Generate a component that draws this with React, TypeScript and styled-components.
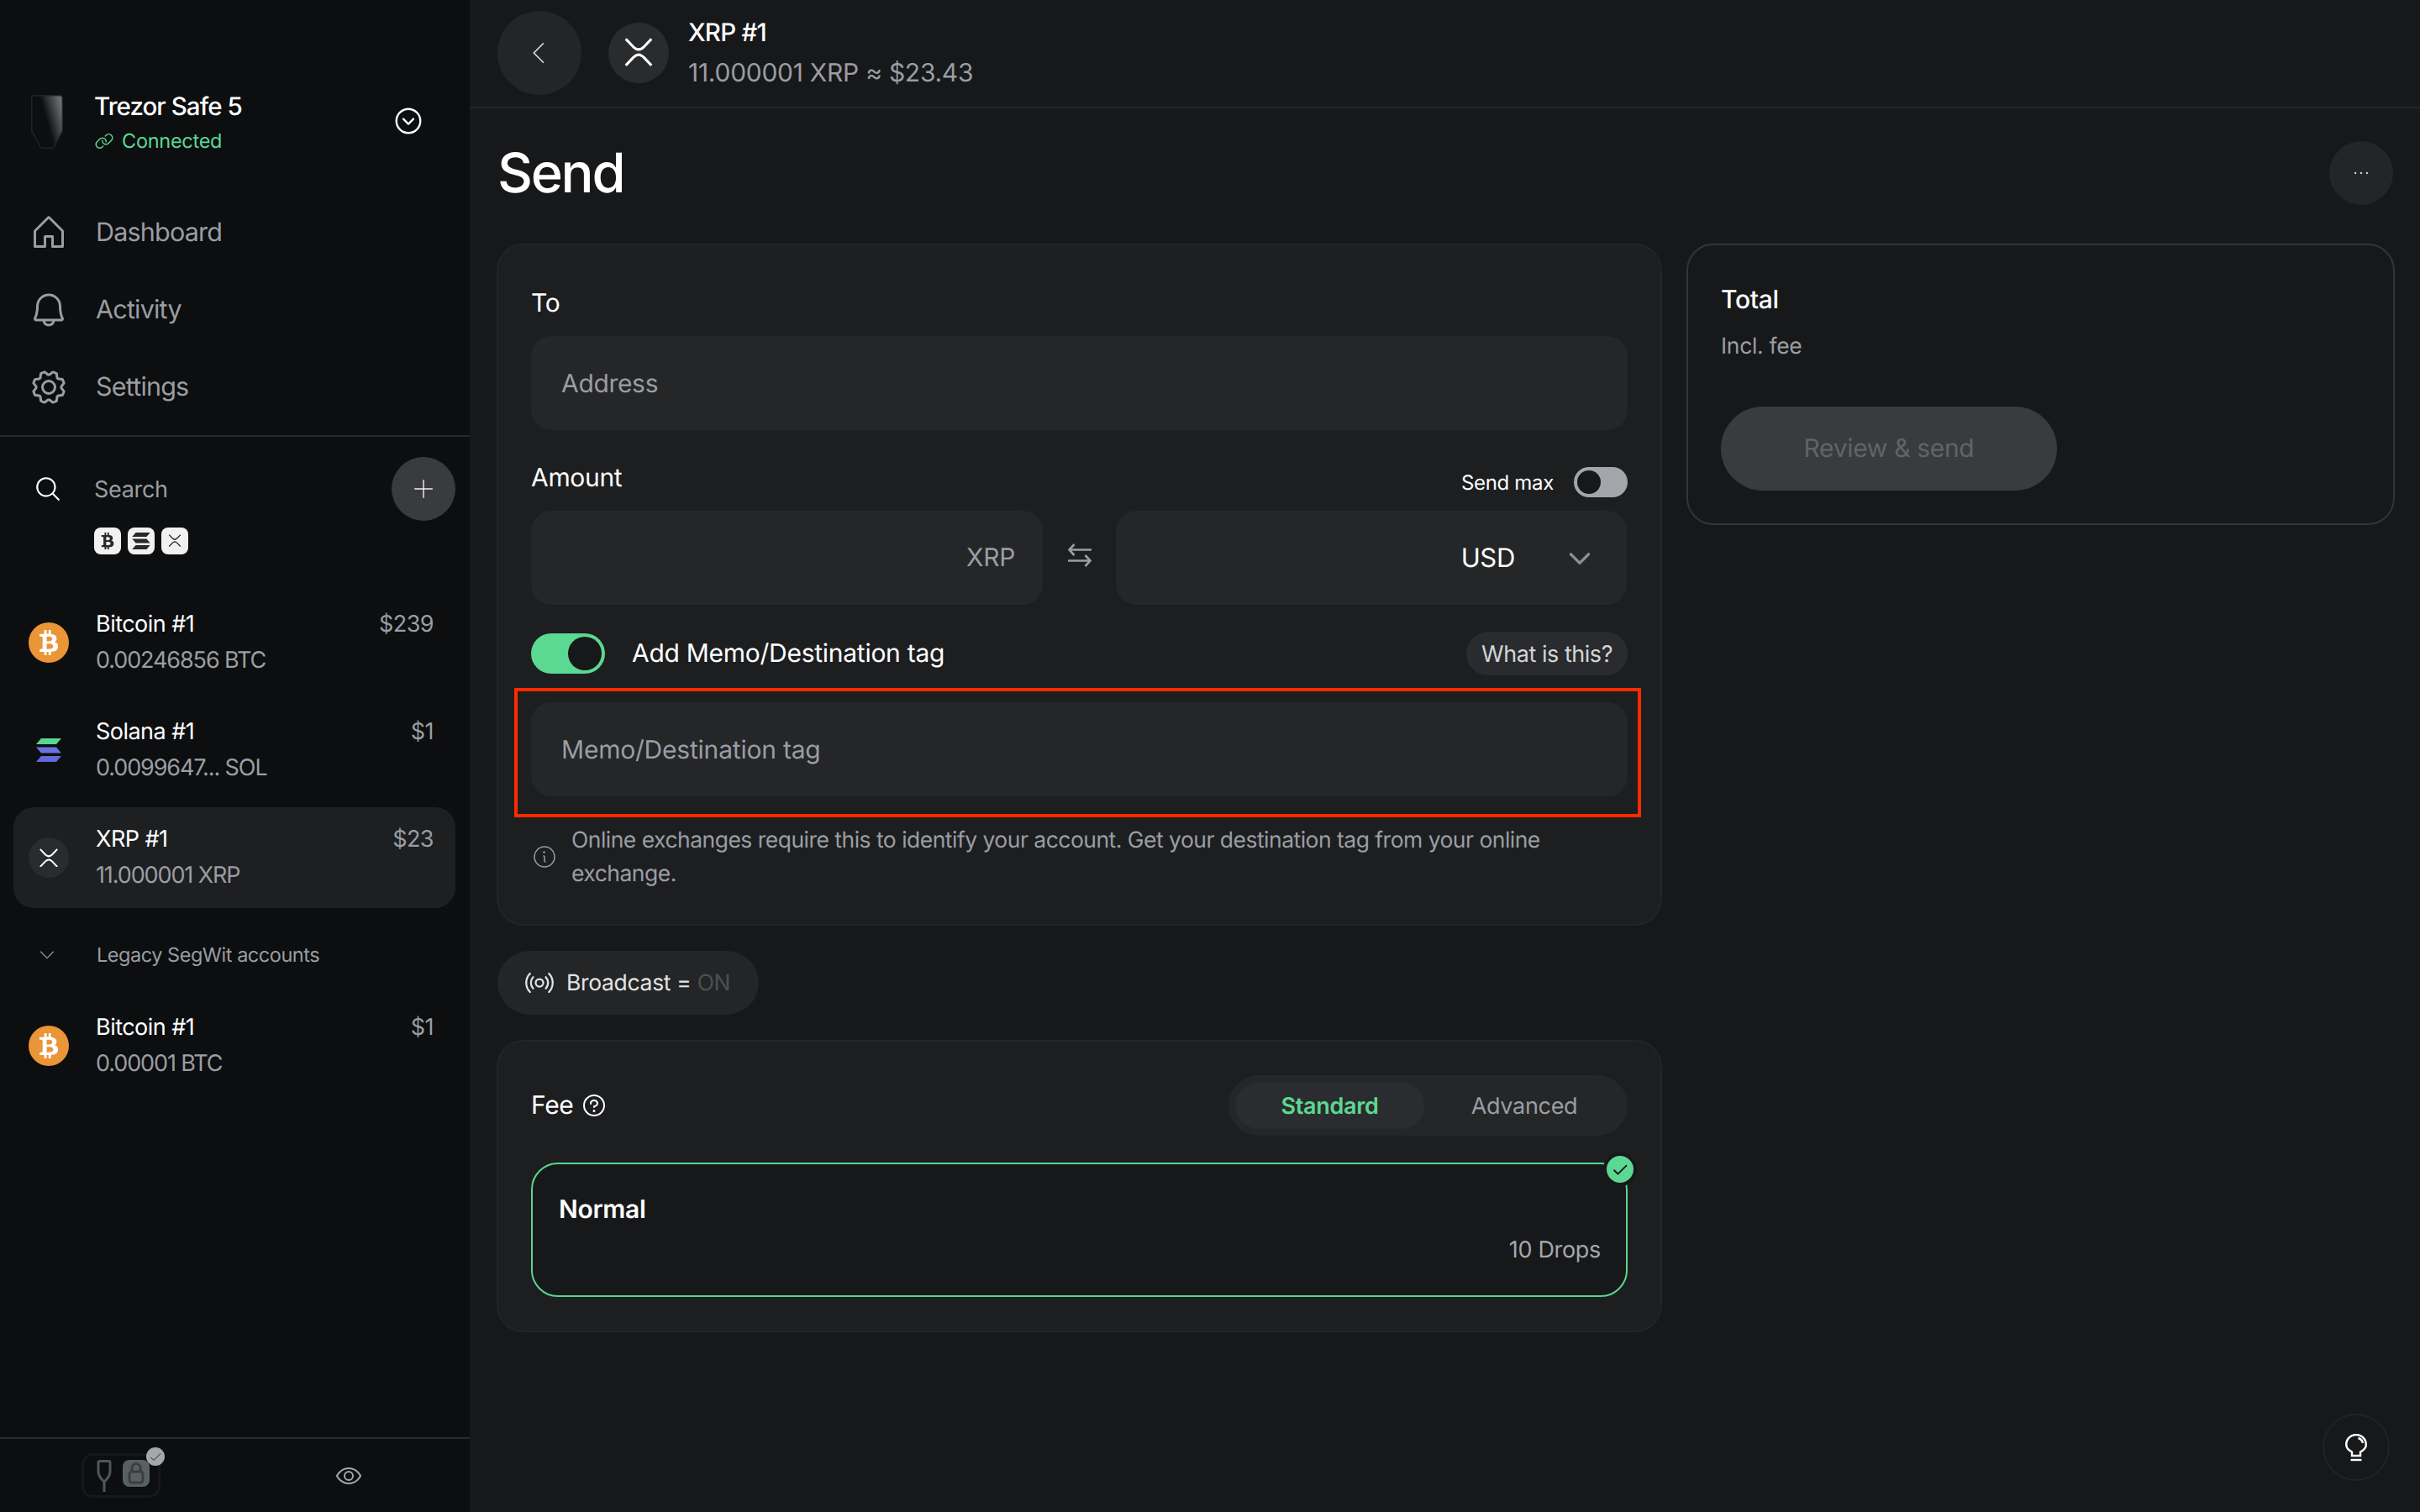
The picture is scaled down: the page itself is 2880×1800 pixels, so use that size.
import React from "react";
import styled, { createGlobalStyle } from "styled-components";
import {
  PiHouse, PiBell, PiGear, PiLink, PiCaretCircleDown, PiMagnifyingGlass, PiPlusLight,
  PiCaretLeftLight, PiCaretDownBold, PiCaretDownLight, PiInfoLight, PiQuestion,
  PiBroadcast, PiCheckBold, PiCheck, PiEye, PiDotsThree,
} from "react-icons/pi";
import { FaBtc } from "react-icons/fa";

const Global = createGlobalStyle`
  html, body { margin: 0; padding: 0; background: #17181a; }
  body { font-family: Inter, "Noto Sans", sans-serif; color: #fff; text-rendering: geometricPrecision; }
  * { box-sizing: border-box; }
  #root { width: 2880px; height: 1800px; overflow: hidden; }
`;

const Shell = styled.div`
  display: flex;
  width: 2880px;
  height: 1800px;
  letter-spacing: -0.02em;
`;

/* ---------- sidebar ---------- */
const Sidebar = styled.aside`
  width: 559px;
  height: 1800px;
  flex: none;
  display: flex;
  flex-direction: column;
  background: #0c0e10;
`;
const DeviceHeader = styled.div`
  height: 231px;
  flex: none;
  display: flex;
  align-items: flex-start;
  padding: 113px 0 0 37px;
`;
const DeviceText = styled.div`
  margin: -10px 0 0 37px;
  width: 355px;
`;
const DeviceName = styled.div`
  font-size: 29.5px;
  line-height: 48px;
  font-weight: 450;
  letter-spacing: -0.032em;
`;
const DeviceStatus = styled.div`
  display: flex;
  align-items: center;
  gap: 9px;
  margin: -3px 0 0 0;
  font-size: 23.5px;
  line-height: 40px;
  color: #5bd891;
  letter-spacing: -0.012em;
`;
const ChevronCircle = styled.div`
  display: flex;
  margin-top: 12px;
  color: #fff;
  font-size: 38px;
`;
const Nav = styled.nav`
  margin: -1px 0 12px;
`;
const NavItem = styled.div`
  display: flex;
  align-items: center;
  height: 92px;
  padding-left: 34px;
  gap: 32px;
  font-size: 30.5px;
  color: #9a9da2;
  letter-spacing: -0.026em;
  svg { font-size: 48px; flex: none; margin-top: 1px; }
`;
const Rule = styled.div`
  height: 2px;
  flex: none;
  background: #2a2b2d;
`;
const SearchRow = styled.div`
  display: flex;
  align-items: center;
  padding: 24px 17px 0 40px;
  svg { flex: none; }
`;
const SearchLabel = styled.div`
  flex: 1;
  margin-left: 38px;
  font-size: 27px;
  color: #9a9da2;
`;
const AddButton = styled.div`
  width: 76px;
  height: 76px;
  border-radius: 50%;
  background: #3a3b3d;
  display: flex;
  align-items: center;
  justify-content: center;
  color: #f0f0f0;
  font-size: 30px;
`;
const Chips = styled.div`
  display: flex;
  gap: 8px;
  margin: 8px 0 45px 112px;
`;
const Chip = styled.div`
  width: 32px;
  height: 32px;
  border-radius: 8px;
  background: #f1f1f1;
  color: #26282a;
  display: flex;
  align-items: center;
  justify-content: center;
`;
const AccountList = styled.div`
  display: flex;
  flex-direction: column;
`;
const AccountRow = styled.div<{ $active?: boolean }>`
  display: flex;
  align-items: center;
  height: 120px;
  margin: 0 17px 8px 16px;
  padding: 0 26px 0 18px;
  gap: 32px;
  border-radius: 24px;
  background: ${(p) => (p.$active ? "#1e1f21" : "transparent")};
`;
const CoinDisc = styled.div<{ $bg: string }>`
  width: 48px;
  height: 48px;
  flex: none;
  border-radius: 50%;
  background: ${(p) => p.$bg};
  display: flex;
  align-items: center;
  justify-content: center;
  color: #fff;
`;
const AccountBody = styled.div`
  flex: 1;
  min-width: 0;
  margin-top: -3px;
`;
const AccountTop = styled.div`
  display: flex;
  justify-content: space-between;
  font-size: 27px;
  line-height: 43px;
  letter-spacing: -0.02em;
`;
const AccountValue = styled.span`
  color: #9a9da2;
`;
const AccountSub = styled.div`
  font-size: 27px;
  line-height: 43px;
  color: #9a9da2;
  letter-spacing: -0.041em;
`;
const GroupLabel = styled.div`
  display: flex;
  align-items: center;
  height: 96px;
  padding: 6px 0 0 44px;
  gap: 47px;
  margin-top: -4px;
  margin-bottom: 4px;
  font-size: 23.5px;
  color: #9a9da2;
  letter-spacing: -0.02em;
  svg { font-size: 24px; flex: none; }
`;
const SidebarFooter = styled.div`
  margin-top: auto;
  height: 89px;
  border-top: 2px solid #2a2b2d;
  display: flex;
  align-items: center;
  padding-left: 97px;
  gap: 208px;
`;
const LockBox = styled.div`
  position: relative;
  width: 94px;
  height: 53px;
  border: 3px solid #17181b;
  border-radius: 14px;
  display: flex;
  align-items: center;
  gap: 13px;
  padding-left: 15px;
`;
const LockSquare = styled.div`
  width: 32px;
  height: 32px;
  border-radius: 8px;
  background: #596060;
  display: flex;
  align-items: center;
  justify-content: center;
  margin-top: -5px;
`;
const LockBadge = styled.div`
  position: absolute;
  top: -10px;
  right: -8px;
  width: 22px;
  height: 22px;
  border-radius: 50%;
  background: #a4a8ad;
  color: #43474a;
  display: flex;
  align-items: center;
  justify-content: center;
  font-size: 16px;
`;
const EyeIcon = styled.div`
  display: flex;
  color: #a4a8ad;
  font-size: 32px;
`;

/* ---------- main ---------- */
const Main = styled.main`
  position: relative;
  flex: 1;
  min-width: 0;
  background: #17181a;
`;
const TopBar = styled.header`
  height: 129px;
  border-bottom: 2px solid #242527;
  display: flex;
  align-items: center;
  padding-left: 33px;
`;
const BackButton = styled.div`
  width: 100px;
  height: 100px;
  border-radius: 50%;
  background: #242527;
  display: flex;
  align-items: center;
  justify-content: center;
  margin-right: 32px;
  color: #d8d9da;
  font-size: 36px;
  margin-top: -2px;
`;
const TopCoin = styled.div`
  width: 72px;
  height: 72px;
  border-radius: 50%;
  background: #2a2b2d;
  display: flex;
  align-items: center;
  justify-content: center;
  margin-right: 23px;
  margin-top: -2px;
`;
const TopText = styled.div`
  margin-top: -1px;
`;
const TopTitle = styled.div`
  font-size: 29.5px;
  line-height: 48px;
  font-weight: 450;
  letter-spacing: -0.027em;
`;
const TopSub = styled.div`
  font-size: 30px;
  line-height: 48px;
  color: #9a9da2;
  letter-spacing: -0.009em;
`;
const HeaderRow = styled.div`
  display: flex;
  align-items: center;
  justify-content: space-between;
  height: 154px;
  margin-bottom: 7px;
  padding: 0 32px 0 33px;
`;
const Title = styled.h1`
  margin: 0;
  font-size: 65px;
  line-height: 80px;
  font-weight: 450;
  letter-spacing: -0.035em;
`;
const MoreButton = styled.div`
  width: 76px;
  height: 76px;
  border-radius: 50%;
  background: #242527;
  display: flex;
  align-items: center;
  justify-content: center;
  color: #cfd1d3;
  font-size: 26px;
`;
const Columns = styled.div`
  display: grid;
  grid-template-columns: 1387px 843px;
  gap: 29px;
  padding-left: 32px;
  align-items: start;
`;
const LeftColumn = styled.div`
  display: flex;
  flex-direction: column;
`;
const Card = styled.section`
  background: #1d1e20;
  border: 2px solid #232426;
  border-radius: 32px;
  padding: 44px 39px 39px;
`;
const Label = styled.div`
  font-size: 30px;
  line-height: 48px;
  padding-top: 1px;
  height: 48px;
`;
const ToLabel = styled(Label)`
  margin-bottom: 16px;
`;
const Field = styled.div`
  height: 112px;
  border-radius: 24px;
  background: #252628;
  display: flex;
  align-items: center;
  justify-content: space-between;
  padding: 1px 36px 0;
  font-size: 30px;
  color: #9a9da2;
`;
const AmountHead = styled.div`
  display: flex;
  align-items: flex-end;
  justify-content: space-between;
  height: 64px;
  margin-top: 32px;
  padding-bottom: 16px;
`;
const SendMax = styled.div`
  display: flex;
  align-items: center;
  gap: 24px;
  font-size: 24px;
`;
const Toggle = styled.div<{ $on?: boolean }>`
  display: flex;
  align-items: center;
  justify-content: ${(p) => (p.$on ? "flex-end" : "flex-start")};
  width: ${(p) => (p.$on ? 88 : 64)}px;
  height: ${(p) => (p.$on ? 48 : 36)}px;
  border-radius: 24px;
  padding: 4px;
  background: ${(p) => (p.$on ? "#5bd891" : "#a2a6ab")};
  flex: none;
`;
const ToggleThumb = styled.div<{ $on?: boolean }>`
  width: ${(p) => (p.$on ? 40 : 28)}px;
  height: ${(p) => (p.$on ? 40 : 28)}px;
  border-radius: 50%;
  background: #17181a;
`;
const AmountGrid = styled.div`
  display: grid;
  grid-template-columns: 609px 87px 608px;
  align-items: center;
`;
const AmountField = styled(Field)`
  justify-content: flex-end;
  padding: 0 33px;
`;
const CurrencyField = styled(Field)`
  justify-content: flex-end;
  padding: 0 39px 0 0;
  gap: 60px;
  font-size: 31px;
  color: #fff;
  svg { color: #8c8f94; font-size: 34px; }
`;
const SwapIcon = styled.div`
  display: flex;
  justify-content: center;
  margin-top: -6px;
`;
const MemoRow = styled.div`
  display: flex;
  align-items: center;
  gap: 32px;
  height: 52px;
  margin-top: 32px;
  font-size: 30px;
  letter-spacing: -0.009em;
`;
const HintButton = styled.div`
  margin-left: auto;
  height: 52px;
  padding: 0 18px;
  border-radius: 26px;
  background: #2a2b2e;
  display: flex;
  align-items: center;
  font-size: 27px;
  color: #d3d4d6;
  letter-spacing: -0.017em;
`;
const MemoField = styled(Field)`
  position: relative;
  margin-top: 32px;
  letter-spacing: -0.007em;
  &::after {
    content: "";
    position: absolute;
    inset: -17px -16px -25px -20px;
    border: 4px solid #ff2a00;
    pointer-events: none;
  }
`;
const Help = styled.div`
  display: flex;
  align-items: center;
  gap: 16px;
  margin-top: 32px;
  margin-bottom: 1px;
  font-size: 26.5px;
  line-height: 40px;
  color: #9a9da2;
  letter-spacing: -0.0195em;
  svg { font-size: 32px; flex: none; }
`;
const BroadcastPill = styled.div`
  align-self: flex-start;
  display: flex;
  align-items: center;
  gap: 14px;
  height: 76px;
  margin: 30px 0 30px 1px;
  padding: 0 34px 0 32px;
  border-radius: 38px;
  background: #242527;
  font-size: 26.5px;
  color: #e2e3e4;
  svg { font-size: 36px; flex: none; }
`;
const Off = styled.span`
  color: #4a5050;
`;
const FeeCard = styled(Card)`
  padding: 40px 39px 40px;
`;
const FeeHead = styled.div`
  display: flex;
  align-items: center;
  justify-content: space-between;
  height: 72px;
`;
const FeeTitle = styled.div`
  display: flex;
  align-items: center;
  gap: 8px;
  font-size: 30px;
  svg { font-size: 32px; }
`;
const Segmented = styled.div`
  width: 475px;
  height: 72px;
  border-radius: 36px;
  background: #252628;
  display: flex;
  align-items: center;
  padding: 0 8px;
`;
const Segment = styled.div<{ $active?: boolean }>`
  width: ${(p) => (p.$active ? 225 : 234)}px;
  height: 56px;
  border-radius: 28px;
  display: flex;
  align-items: center;
  justify-content: center;
  padding-left: ${(p) => (p.$active ? 0 : 4)}px;
  font-size: 27px;
  font-weight: ${(p) => (p.$active ? 600 : 400)};
  color: ${(p) => (p.$active ? "#5bd891" : "#9a9da2")};
  background: ${(p) => (p.$active ? "#2b2c2f" : "transparent")};
`;
const FeeOption = styled.div`
  position: relative;
  height: 160px;
  margin-top: 32px;
  border: 2.5px solid #5bd68d;
  border-radius: 32px;
  background: #17181a;
  padding: 30px 30px 0 31px;
`;
const FeeName = styled.div`
  font-size: 30px;
  line-height: 48px;
  font-weight: 600;
`;
const FeeValue = styled.div`
  margin-top: 4px;
  text-align: right;
  font-size: 27px;
  line-height: 40px;
  color: #a4a7ab;
`;
const FeeCheck = styled.div`
  position: absolute;
  top: -14px;
  right: -13px;
  width: 40px;
  height: 40px;
  border-radius: 50%;
  background: #5bd891;
  border: 4px solid #17181a;
  color: #17181a;
  display: flex;
  align-items: center;
  justify-content: center;
  font-size: 20px;
`;
const TotalCard = styled.section`
  border: 2px solid #333436;
  border-radius: 32px;
  padding: 40px 39px 39px;
`;
const TotalTitle = styled.div`
  font-size: 30px;
  line-height: 48px;
  font-weight: 500;
  padding-top: 1px;
  height: 48px;
`;
const TotalSub = styled.div`
  margin-top: 12px;
  font-size: 26.5px;
  line-height: 40px;
  color: #9a9da2;
`;
const ReviewButton = styled.div`
  width: 400px;
  height: 100px;
  margin-top: 52px;
  border-radius: 50px;
  background: #3a3b3d;
  color: #5f6565;
  font-size: 30px;
  display: flex;
  align-items: center;
  justify-content: center;
`;
const BulbButton = styled.div`
  position: absolute;
  right: 36px;
  bottom: 37px;
  width: 80px;
  height: 80px;
  border-radius: 50%;
  border: 2px solid #222325;
  display: flex;
  align-items: center;
  justify-content: center;
`;

/* ---------- drawings ---------- */
const XrpMark = ({ size, color = "#fff" }: { size: number; color?: string }) => (
  <svg width={size} height={size * 0.95} viewBox="0 0 40 38" fill="none" stroke={color} strokeWidth="3.4">
    <path d="M3 1.5 L13 12 Q20 19 27 12 L37 1.5" />
    <path d="M3 36.5 L13 26 Q20 19 27 26 L37 36.5" />
  </svg>
);

const SolMark = ({ mono }: { mono?: boolean }) => (
  <svg width={mono ? 22 : 30} height={mono ? 20 : 28} viewBox="0 0 30 28">
    <polygon points="6,0 30,0 24,7 0,7" fill={mono ? "#26282a" : "#58d68f"} />
    <polygon points="0,10.5 24,10.5 30,17.5 6,17.5" fill={mono ? "#26282a" : "#6a72e0"} />
    <polygon points="6,21 30,21 24,28 0,28" fill={mono ? "#26282a" : "#6468d8"} />
  </svg>
);

const SwapGlyph = () => (
  <svg width="30" height="28" viewBox="0 0 30 28" fill="none" stroke="#9a9da2" strokeWidth="2.6">
    <path d="M29 7.5 H2.5 M8.5 1 L2.5 7.5 L8.5 14" />
    <path d="M1 20.5 H27.5 M21.5 14 L27.5 20.5 L21.5 27" />
  </svg>
);

const DeviceArt = () => (
  <svg width="38" height="64" viewBox="0 0 38 64" style={{ flex: "none" }}>
    <defs>
      <linearGradient id="devGrad" x1="0.2" y1="0.55" x2="0.95" y2="0.2">
        <stop offset="0.35" stopColor="#0c0e10" />
        <stop offset="1" stopColor="#6a6c70" />
      </linearGradient>
    </defs>
    <path
      d="M3 .8 H35 Q37.2 .8 37.2 3 V43 L27 62 Q26.4 63.2 25 63.2 H13 Q11.6 63.2 11 62 L.8 43 V3 Q.8 .8 3 .8 Z"
      fill="url(#devGrad)"
      stroke="#26282a"
      strokeWidth="1.2"
    />
  </svg>
);

const TrezorGlyph = () => (
  <svg width="18" height="38" viewBox="0 0 18 38" fill="none" stroke="#4f5757" strokeWidth="3">
    <path d="M2 3 Q2 1.5 3.5 1.5 H14.5 Q16 1.5 16 3 V14 Q16 18 12 23 L9 26 L6 23 Q2 18 2 14 Z" />
    <path d="M9 25 V38" />
  </svg>
);

const LockGlyph = () => (
  <svg width="20" height="26" viewBox="0 0 20 26" fill="none" stroke="#3a3e40" strokeWidth="3">
    <path d="M5 11 V6.5 a5 5 0 0 1 10 0 V11" />
    <rect x="2" y="11" width="16" height="13" rx="3" />
  </svg>
);

const BulbGlyph = () => (
  <svg width="26" height="33" viewBox="0 0 26 33" fill="none" stroke="#fff" strokeWidth="2.4">
    <path d="M8 26 V21.5 C4 19.5 1.2 16.5 1.2 12.8 A11.8 11.8 0 0 1 24.8 12.8 C24.8 16.5 22 19.5 18 21.5 V26 Z" />
    <path d="M6.5 31 H19.5" />
    <path d="M15.5 5 Q20 6.5 21 11" />
  </svg>
);

const accounts = [
  { name: "Bitcoin #1", value: "$239", sub: "0.00246856 BTC", coin: "btc" },
  { name: "Solana #1", value: "$1", sub: "0.0099647... SOL", coin: "sol" },
  { name: "XRP #1", value: "$23", sub: "11.000001 XRP", coin: "xrp", active: true },
];

const Coin = ({ coin }: { coin: string }) => {
  if (coin === "btc") {
    return (
      <CoinDisc $bg="#e99538">
        <FaBtc size={30} />
      </CoinDisc>
    );
  }
  if (coin === "sol") {
    return (
      <CoinDisc $bg="transparent">
        <SolMark />
      </CoinDisc>
    );
  }
  return (
    <CoinDisc $bg="#2a2b2d">
      <XrpMark size={24} />
    </CoinDisc>
  );
};

const Account = ({ name, value, sub, coin, active }: { name: string; value: string; sub: string; coin: string; active?: boolean }) => (
  <AccountRow $active={active}>
    <Coin coin={coin} />
    <AccountBody>
      <AccountTop>
        <span>{name}</span>
        <AccountValue>{value}</AccountValue>
      </AccountTop>
      <AccountSub>{sub}</AccountSub>
    </AccountBody>
  </AccountRow>
);

export default function App() {
  return (
    <>
      <Global />
      <Shell>
        <Sidebar>
          <DeviceHeader>
            <DeviceArt />
            <DeviceText>
              <DeviceName>Trezor Safe 5</DeviceName>
              <DeviceStatus>
                <PiLink size={24} />
                Connected
              </DeviceStatus>
            </DeviceText>
            <ChevronCircle>
              <PiCaretCircleDown />
            </ChevronCircle>
          </DeviceHeader>
          <Nav>
            <NavItem><PiHouse />Dashboard</NavItem>
            <NavItem><PiBell />Activity</NavItem>
            <NavItem><PiGear />Settings</NavItem>
          </Nav>
          <Rule />
          <SearchRow>
            <PiMagnifyingGlass size={34} color="#fff" />
            <SearchLabel>Search</SearchLabel>
            <AddButton><PiPlusLight /></AddButton>
          </SearchRow>
          <Chips>
            <Chip><FaBtc size={20} /></Chip>
            <Chip><SolMark mono /></Chip>
            <Chip><XrpMark size={16} color="#26282a" /></Chip>
          </Chips>
          <AccountList>
            {accounts.map((a) => (
              <Account key={a.coin} {...a} />
            ))}
            <GroupLabel>
              <PiCaretDownLight />
              Legacy SegWit accounts
            </GroupLabel>
            <Account name="Bitcoin #1" value="$1" sub="0.00001 BTC" coin="btc" />
          </AccountList>
          <SidebarFooter>
            <LockBox>
              <TrezorGlyph />
              <LockSquare><LockGlyph /></LockSquare>
              <LockBadge><PiCheck /></LockBadge>
            </LockBox>
            <EyeIcon><PiEye /></EyeIcon>
          </SidebarFooter>
        </Sidebar>
        <Main>
          <TopBar>
            <BackButton><PiCaretLeftLight /></BackButton>
            <TopCoin><XrpMark size={36} /></TopCoin>
            <TopText>
              <TopTitle>XRP #1</TopTitle>
              <TopSub>11.000001 XRP ≈ $23.43</TopSub>
            </TopText>
          </TopBar>
          <HeaderRow>
            <Title>Send</Title>
            <MoreButton><PiDotsThree /></MoreButton>
          </HeaderRow>
          <Columns>
            <LeftColumn>
              <Card>
                <ToLabel>To</ToLabel>
                <Field>Address</Field>
                <AmountHead>
                  <Label>Amount</Label>
                  <SendMax>
                    Send max
                    <Toggle><ToggleThumb /></Toggle>
                  </SendMax>
                </AmountHead>
                <AmountGrid>
                  <AmountField>XRP</AmountField>
                  <SwapIcon><SwapGlyph /></SwapIcon>
                  <CurrencyField>
                    USD
                    <PiCaretDownBold />
                  </CurrencyField>
                </AmountGrid>
                <MemoRow>
                  <Toggle $on><ToggleThumb $on /></Toggle>
                  Add Memo/Destination tag
                  <HintButton>What is this?</HintButton>
                </MemoRow>
                <MemoField>Memo/Destination tag</MemoField>
                <Help>
                  <PiInfoLight />
                  <div>
                    Online exchanges require this to identify your account. Get your destination tag from your online
                    <br />
                    exchange.
                  </div>
                </Help>
              </Card>
              <BroadcastPill>
                <PiBroadcast />
                <span>
                  Broadcast = <Off>ON</Off>
                </span>
              </BroadcastPill>
              <FeeCard>
                <FeeHead>
                  <FeeTitle>
                    Fee
                    <PiQuestion />
                  </FeeTitle>
                  <Segmented>
                    <Segment $active>Standard</Segment>
                    <Segment>Advanced</Segment>
                  </Segmented>
                </FeeHead>
                <FeeOption>
                  <FeeName>Normal</FeeName>
                  <FeeValue>10 Drops</FeeValue>
                  <FeeCheck><PiCheckBold /></FeeCheck>
                </FeeOption>
              </FeeCard>
            </LeftColumn>
            <TotalCard>
              <TotalTitle>Total</TotalTitle>
              <TotalSub>Incl. fee</TotalSub>
              <ReviewButton>Review &amp; send</ReviewButton>
            </TotalCard>
          </Columns>
          <BulbButton><BulbGlyph /></BulbButton>
        </Main>
      </Shell>
    </>
  );
}
